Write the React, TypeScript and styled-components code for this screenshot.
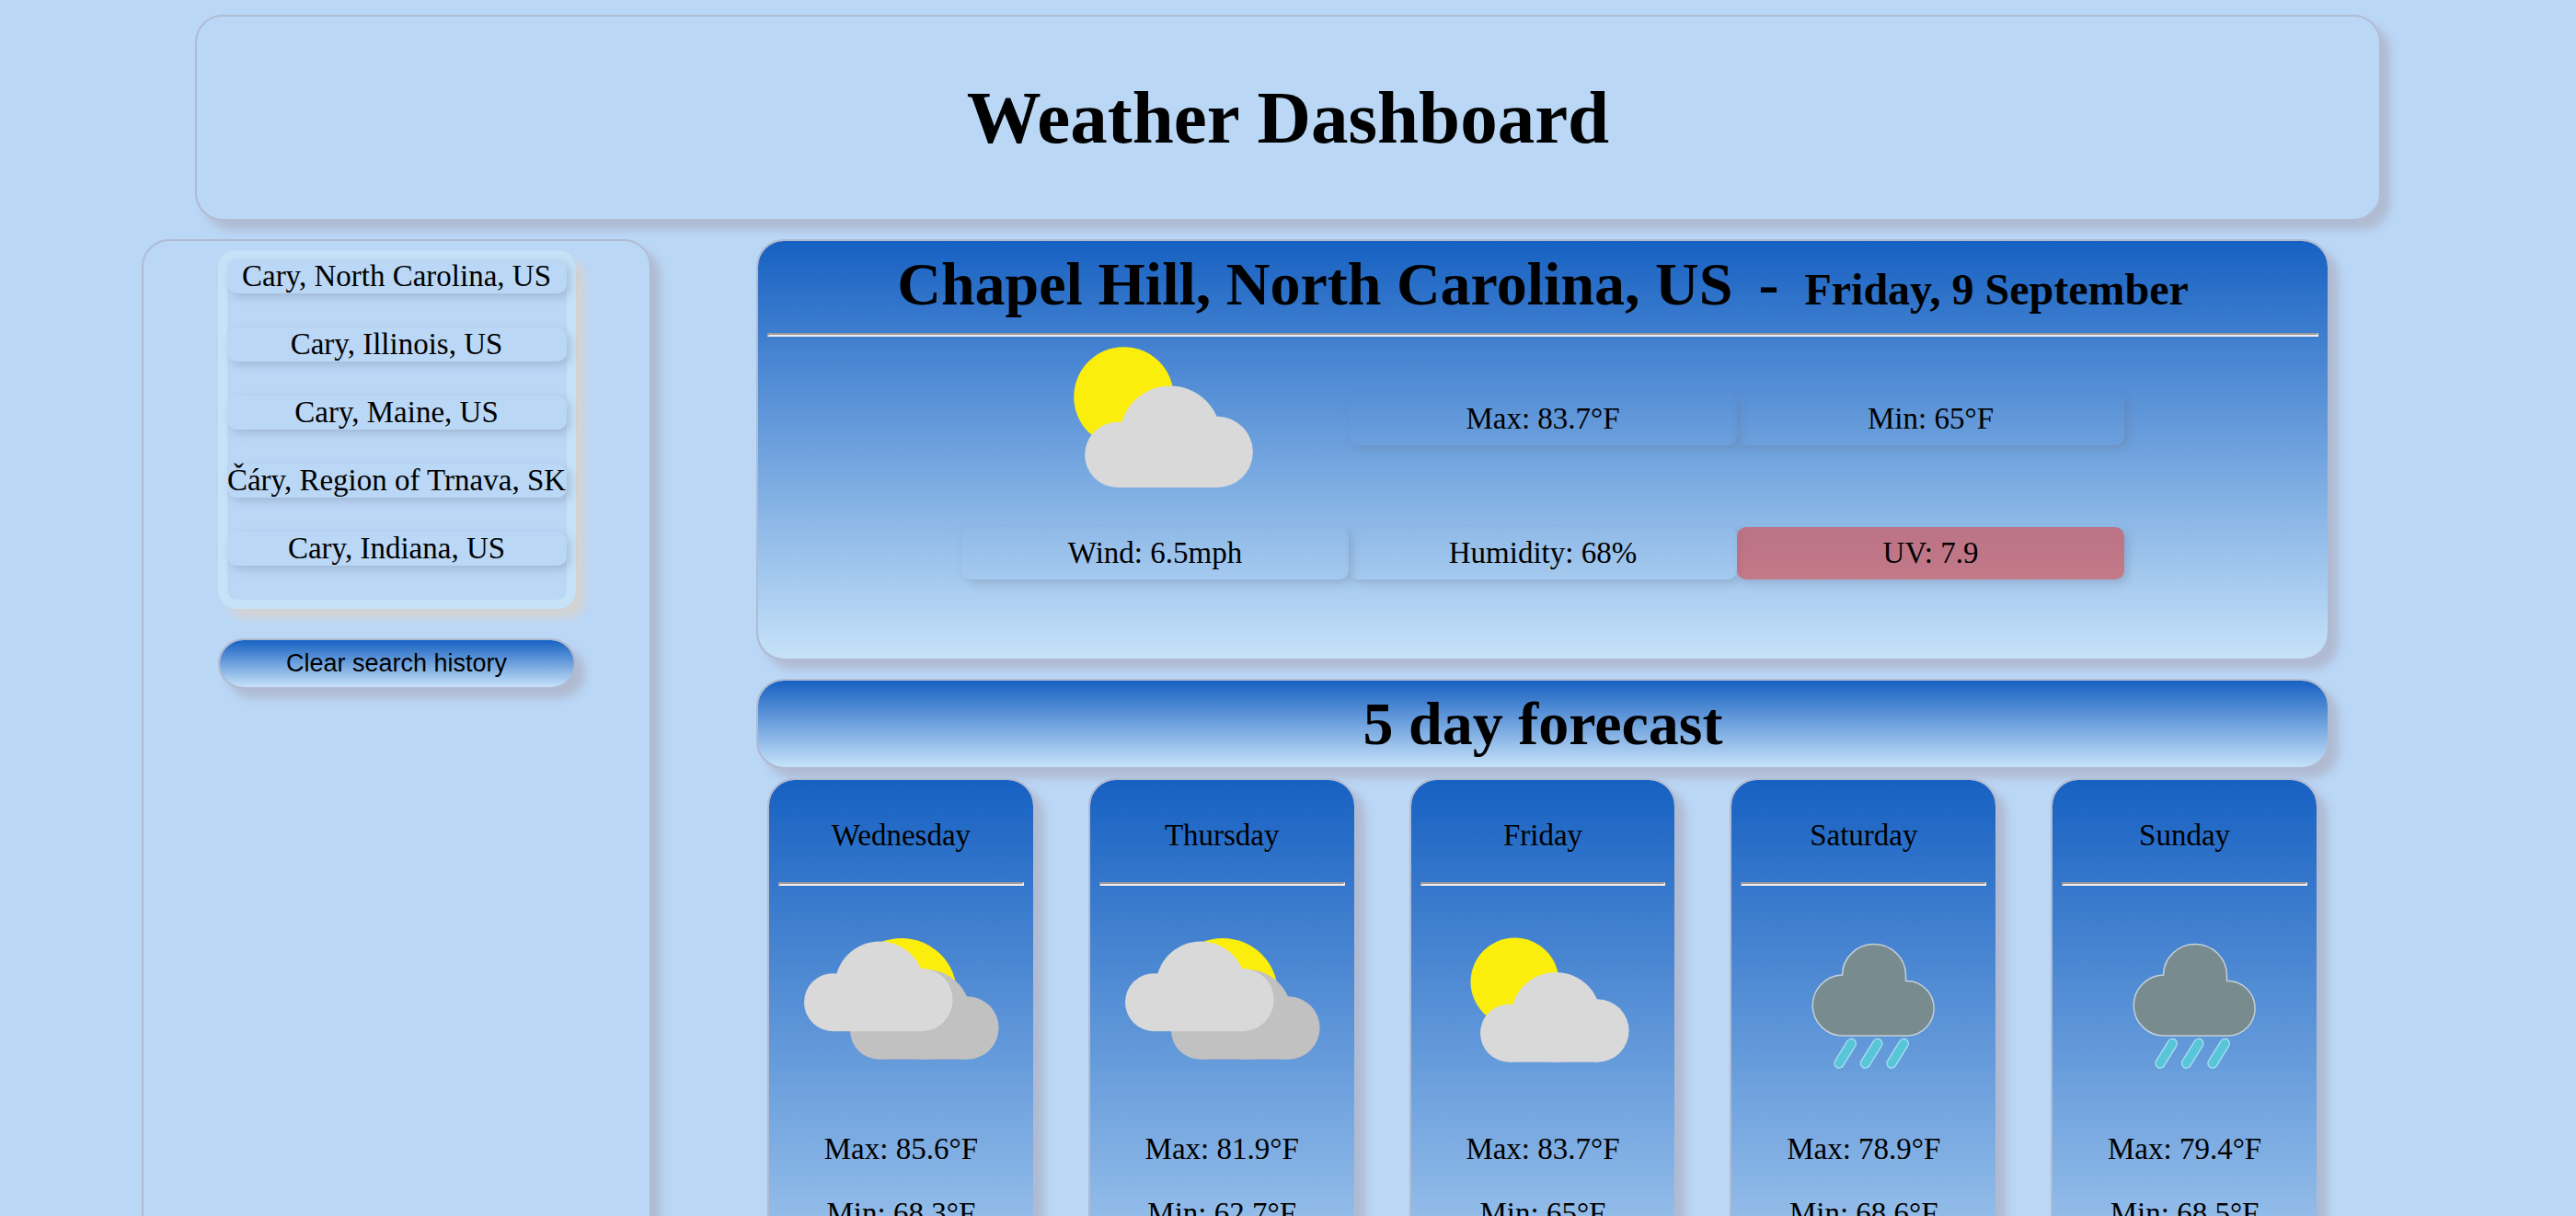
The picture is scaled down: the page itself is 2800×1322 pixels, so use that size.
import React from "react";
import styled, { createGlobalStyle, css } from "styled-components";

const color = {
  page: "#bad7f6",
  pale: "#c6e2f9",
  deep: "#1761c2",
  edge: "#b0bbd2",
  cloud: "#d9d9d9",
  cloudBack: "#c1c1c1",
  sun: "#fcee0c",
};

const serif = `"Liberation Serif", "Times New Roman", serif`;
const sans = `"Liberation Sans", Arial, sans-serif`;

const GlobalStyle = createGlobalStyle`
  *, *::before, *::after { box-sizing: border-box; }
  body {
    margin: 0;
    background: ${color.page};
    color: #000;
    font-family: ${serif};
    font-size: 33px;
    line-height: 37px;
  }
  h1, h2, h3, p, ul { margin: 0; padding: 0; }
  button { color: inherit; border: 0; cursor: pointer; }
`;

const raised = css`
  border: 2px solid ${color.edge};
  border-radius: 30px;
  box-shadow: 10px 10px 10px ${color.edge};
`;

const sky = css`
  background: linear-gradient(${color.deep}, ${color.pale}) padding-box, ${color.edge};
`;

const soft = css`
  border-radius: 10px;
  box-shadow: 4px 4px 10px rgba(105, 115, 140, 0.3);
`;

const Page = styled.div`
  height: 100vh;
  overflow: hidden;
  padding-top: 16px;
`;

const Banner = styled.header`
  ${raised}
  display: flex;
  align-items: center;
  justify-content: center;
  min-height: 224px;
  margin: 0 212px 20px;
`;

const SiteTitle = styled.h1`
  font-size: 81px;
  line-height: 94px;
`;

const Columns = styled.div`
  display: grid;
  grid-template-columns: minmax(0, 554fr) minmax(0, 1710fr);
  column-gap: 114px;
  padding: 0 268px 0 154px;
`;

const Sidebar = styled.aside`
  ${raised}
  display: flex;
  flex-direction: column;
  align-items: center;
  gap: 32px;
  padding-top: 10px;
`;

const HistoryList = styled.ul`
  width: 389px;
  list-style: none;
  border: 10px solid ${color.pale};
  border-radius: 20px;
  box-shadow: 10px 10px 10px lightgray;
`;

const HistoryItem = styled.li`
  padding-bottom: 37px;
`;

const HistoryButton = styled.button`
  ${soft}
  display: flex;
  justify-content: center;
  width: 100%;
  padding: 0;
  background: ${color.page};
  font: inherit;
  white-space: nowrap;
`;

const ClearButton = styled.button`
  ${raised}
  ${sky}
  width: 389px;
  height: 55px;
  font-family: ${sans};
  font-size: 27px;
`;

const Main = styled.main`
  display: flex;
  flex-direction: column;
`;

const CurrentCard = styled.section`
  ${raised}
  ${sky}
  padding: 9px 10px 86px;
  margin-bottom: 20px;
`;

const CurrentHeading = styled.div`
  display: flex;
  align-items: baseline;
  justify-content: center;
  gap: 28px;
  padding-bottom: 15px;
  line-height: 76px;
`;

const Place = styled.h2`
  font-size: 66px;
`;

const Dash = styled.span`
  font-size: 66px;
  font-weight: bold;
`;

const Today = styled.h3`
  font-size: 48px;
  line-height: 56px;
`;

const Rule = styled.hr`
  width: 100%;
  height: 4px;
  margin: 0;
  border: 2px solid;
  border-color: #9a9a9a #eeeeee #eeeeee #9a9a9a;
`;

const Stats = styled.div`
  display: grid;
  grid-template-columns: repeat(3, 1fr);
  align-items: center;
  justify-items: center;
  row-gap: 32px;
  width: 75%;
  margin: 5px auto 0;
`;

const Stat = styled.p<{ $alert?: boolean }>`
  ${soft}
  width: 100%;
  padding: 10px;
  text-align: center;
  ${(p) => p.$alert && "background: rgba(211, 79, 82, 0.65);"}
`;

const ForecastTitle = styled.h2`
  ${raised}
  ${sky}
  padding: 9px 0;
  margin-bottom: 10px;
  font-size: 66px;
  line-height: 76px;
  text-align: center;
`;

const Days = styled.div`
  display: grid;
  grid-template-columns: repeat(5, 1fr);
  column-gap: 58px;
  padding: 0 12px;
`;

const DayCard = styled.article`
  ${raised}
  ${sky}
  display: flex;
  flex-direction: column;
  align-items: center;
  min-height: 680px;
  padding: 42px 10px;
`;

const DayName = styled.p`
  padding-bottom: 32px;
`;

const DayIcon = styled.div`
  display: flex;
  padding: 51px 0 67px;
`;

const Reading = styled.p`
  padding-bottom: 33px;
`;

type Sky = "sunCloud" | "cloudy" | "rain";

const Cloud = ({ x, y, fill }: { x: number; y: number; fill: string }) => (
  <g transform={`translate(${x} ${y}) scale(0.888)`} fill={fill}>
    <circle cx="35.5" cy="74.5" r="35.5" />
    <circle cx="92.5" cy="55" r="55" />
    <circle cx="143.5" cy="71.5" r="38.5" />
    <rect x="35.5" y="55" width="108" height="55" />
  </g>
);

const rainCloud =
  "M33 99.5 A33 33 0 0 1 31.5 33.5 A34.5 34 0 0 1 100.5 34.5 V40 H103 A29.8 29.8 0 0 1 103 99.5 Z";

const WeatherIcon = ({ sky: kind, width }: { sky: Sky; width: number }) => (
  <svg width={width} viewBox="0 0 230 150" role="img" aria-label={kind}>
    {kind === "sunCloud" && (
      <>
        <circle cx="84.5" cy="53.5" r="48" fill={color.sun} />
        <Cloud x={47} y={43} fill={color.cloud} />
      </>
    )}
    {kind === "cloudy" && (
      <>
        <circle cx="116" cy="66" r="60" fill={color.sun} />
        <Cloud x={60} y={40} fill={color.cloudBack} />
        <Cloud x={10} y={9.5} fill={color.cloud} />
      </>
    )}
    {kind === "rain" && (
      <g transform="translate(60 12.5)" strokeLinecap="round">
        <path d={rainCloud} fill="#788b8e" stroke="#c3d0d8" strokeWidth="1.5" />
        {[28, 56.5, 85].map((x) => (
          <g key={x}>
            <path d={`M${x} 129.5 l13.3 -21.5`} stroke="#a9e0ee" strokeWidth="11.5" />
            <path d={`M${x} 129.5 l13.3 -21.5`} stroke="#59c5d9" strokeWidth="9" />
          </g>
        ))}
      </g>
    )}
  </svg>
);

const history = [
  "Cary, North Carolina, US",
  "Cary, Illinois, US",
  "Cary, Maine, US",
  "Čáry, Region of Trnava, SK",
  "Cary, Indiana, US",
];

const days: { name: string; sky: Sky; max: string; min: string }[] = [
  { name: "Wednesday", sky: "cloudy", max: "85.6", min: "68.3" },
  { name: "Thursday", sky: "cloudy", max: "81.9", min: "62.7" },
  { name: "Friday", sky: "sunCloud", max: "83.7", min: "65" },
  { name: "Saturday", sky: "rain", max: "78.9", min: "68.6" },
  { name: "Sunday", sky: "rain", max: "79.4", min: "68.5" },
];

export default function App() {
  return (
    <>
      <GlobalStyle />
      <Page>
        <Banner>
          <SiteTitle>Weather Dashboard</SiteTitle>
        </Banner>
        <Columns>
          <Sidebar>
            <HistoryList>
              {history.map((place) => (
                <HistoryItem key={place}>
                  <HistoryButton type="button">{place}</HistoryButton>
                </HistoryItem>
              ))}
            </HistoryList>
            <ClearButton type="button">Clear search history</ClearButton>
          </Sidebar>
          <Main>
            <CurrentCard>
              <CurrentHeading>
                <Place>Chapel Hill, North Carolina, US</Place>
                <Dash>-</Dash>
                <Today>Friday, 9 September</Today>
              </CurrentHeading>
              <Rule />
              <Stats>
                <WeatherIcon sky="sunCloud" width={260} />
                <Stat>Max: 83.7°F</Stat>
                <Stat>Min: 65°F</Stat>
                <Stat>Wind: 6.5mph</Stat>
                <Stat>Humidity: 68%</Stat>
                <Stat $alert>UV: 7.9</Stat>
              </Stats>
            </CurrentCard>
            <ForecastTitle>5 day forecast</ForecastTitle>
            <Days>
              {days.map((day) => (
                <DayCard key={day.name}>
                  <DayName>{day.name}</DayName>
                  <Rule />
                  <DayIcon>
                    <WeatherIcon sky={day.sky} width={230} />
                  </DayIcon>
                  <Reading>Max: {day.max}°F</Reading>
                  <Reading>Min: {day.min}°F</Reading>
                </DayCard>
              ))}
            </Days>
          </Main>
        </Columns>
      </Page>
    </>
  );
}
